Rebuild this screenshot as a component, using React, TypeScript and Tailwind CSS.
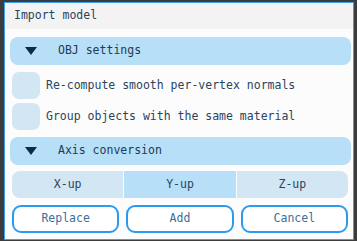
import React, { useState } from 'react';

const mono = { fontFamily: '"DejaVu Sans Mono", "Liberation Mono", monospace' };

const Triangle: React.FC = () => (
    <svg width="12" height="8" viewBox="0 0 12 8" className="shrink-0">
        <path d="M0 0 H12 L6 8 Z" fill="#0c2a4a" />
    </svg>
);

const SectionHeader: React.FC<{ title: string }> = ({ title }) => (
    <div className="ml-[5px] mr-[2px] h-[28px] flex items-center rounded-[8px] bg-[#b7dff8] text-[#213a55]">
        <div className="w-[48px] pl-[15px] flex items-center">
            <Triangle />
        </div>
        <span>{title}</span>
    </div>
);

const CheckRow: React.FC<{ label: string }> = ({ label }) => (
    <div className="ml-[7px] flex items-center gap-[6px] h-[27px]">
        <div className="w-[28px] h-[27px] rounded-[7px] bg-[#d3e6f3]" />
        <span className="text-[#2a4460]">{label}</span>
    </div>
);

const App: React.FC = () => {
    const [axis, setAxis] = useState<'X-up' | 'Y-up' | 'Z-up'>('Y-up');
    const axes: ('X-up' | 'Y-up' | 'Z-up')[] = ['X-up', 'Y-up', 'Z-up'];

    return (
        <div className="w-[357px] h-[241px] bg-[#3c3c3c] pt-[2px] pl-[4px]" style={mono}>
            <div className="w-[350px] h-[238px] border border-[#3aa1ea] bg-[#fcfcfc] flex flex-col text-[11.5px]">
                {/* Title bar */}
                <div className="h-[26px] bg-[#f3f3f3] flex items-center pl-[9px] text-[#2a4460]">
                    Import model
                </div>

                <div className="mt-[8px]">
                    <SectionHeader title="OBJ settings" />
                </div>
                <div className="mt-[7px]">
                    <CheckRow label="Re-compute smooth per-vertex normals" />
                </div>
                <div className="mt-[4px]">
                    <CheckRow label="Group objects with the same material" />
                </div>
                <div className="mt-[7px]">
                    <SectionHeader title="Axis conversion" />
                </div>

                {/* Axis selector */}
                <div className="mt-[6px] ml-[7px] mr-[5px] h-[27px] grid grid-cols-3 gap-[1px] bg-[#fcfcfc]">
                    {axes.map((a, i) => (
                        <button
                            key={a}
                            onClick={() => setAxis(a)}
                            className={`h-full flex items-center justify-center text-[#2a4460] ${axis === a ? 'bg-[#b7dff8]' : 'bg-[#d3e6f3]'} ${i === 0 ? 'rounded-l-[8px]' : ''} ${i === 2 ? 'rounded-r-[8px]' : ''}`}
                        >
                            {a}
                        </button>
                    ))}
                </div>

                {/* Buttons */}
                <div className="mt-[7px] ml-[7px] mr-[5px] grid grid-cols-3 gap-[7px]">
                    {['Replace', 'Add', 'Cancel'].map(b => (
                        <button
                            key={b}
                            className="h-[28px] rounded-[9px] border-2 border-[#2a9cf0] bg-white text-[#3b6e98] flex items-center justify-center"
                        >
                            {b}
                        </button>
                    ))}
                </div>
            </div>
        </div>
    );
};

export default App;
